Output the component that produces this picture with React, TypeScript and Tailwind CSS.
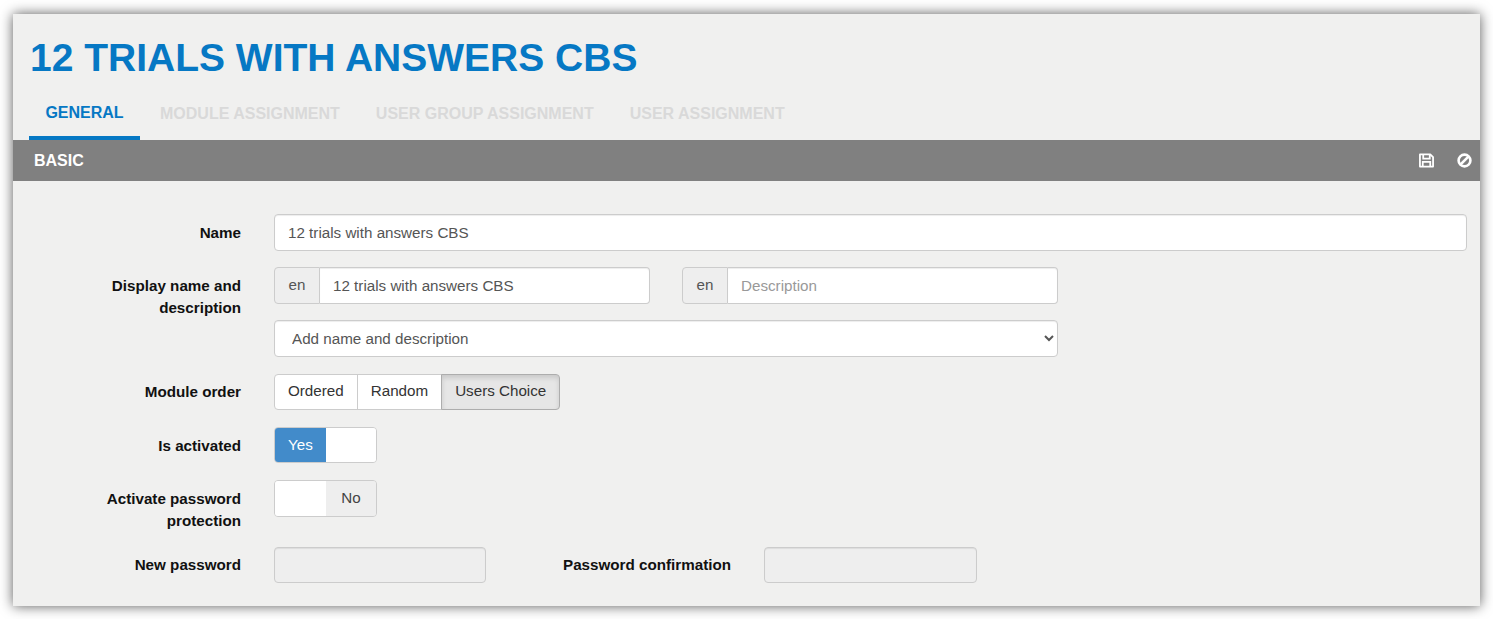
import { ReactNode } from "react";

const fieldClass =
  "h-[36.5px] rounded-[4px] border border-[#ccc] px-[13px] text-[15.2px] text-[#555] placeholder:text-[#999] outline-none shadow-[inset_0_1px_1px_rgba(0,0,0,0.075)]";

function Row({ label, pad = "pt-[7.75px]", children }: { label: ReactNode; pad?: string; children: ReactNode }) {
  return (
    <div className="flex">
      <label className={`w-[228px] shrink-0 ${pad} pl-[50px] text-right text-[15.2px] leading-[22px] font-bold text-[#111]`}>
        {label}
      </label>
      <div className="ml-[33px] min-w-0 flex-1">{children}</div>
    </div>
  );
}

function LangInput({ value, placeholder }: { value?: string; placeholder?: string }) {
  return (
    <div className="flex h-[36.5px] w-[376px]">
      <span className="flex w-[46px] items-center justify-center rounded-l-[4px] border border-[#ccc] bg-[#eee] text-[15.2px] text-[#555]">
        en
      </span>
      <input
        readOnly
        defaultValue={value}
        placeholder={placeholder}
        className={`${fieldClass} min-w-0 flex-1 rounded-l-none border-l-0 bg-white`}
      />
    </div>
  );
}

function SaveIcon() {
  return (
    <svg viewBox="0 0 16 15" className="h-[15px] w-[15px]" fill="none" stroke="currentColor" strokeWidth="1.9">
      <path d="M1 1h11l3 3v10H1z" strokeLinejoin="round" />
      <path d="M4.5 1v4.5h7V1M4 14V9h8v5" />
    </svg>
  );
}

function BanIcon() {
  return (
    <svg viewBox="0 0 16 16" className="size-[15px]" fill="none" stroke="currentColor" strokeWidth="2.8">
      <circle cx="8" cy="8" r="6.3" />
      <path d="M3.6 12.4 12.4 3.6" />
    </svg>
  );
}

export default function App() {
  return (
    <div className="min-h-[619px] bg-white px-[13px] pt-[14px] pb-[13px] font-['Liberation_Sans',Arial,sans-serif]">
      <div className="h-[592px] overflow-hidden bg-[#f0f0ef] shadow-[0_0_12px_rgba(0,0,0,0.65)]">
        <h1 className="pt-[22px] pl-[17px] text-[39px] leading-[44px] font-bold text-[#0678c4]">
          12 TRIALS WITH ANSWERS CBS
        </h1>

        <div className="mt-[14px] flex h-[46px] pl-[16px] text-[16px] font-bold">
          <div className="w-[111px] border-b-[4px] border-[#0678c4] pt-[9px] text-center leading-[20px] text-[#0678c4]">
            GENERAL
          </div>
          <div className="ml-[20px] pt-[10px] leading-[20px] text-[#d9d9d9]">MODULE ASSIGNMENT</div>
          <div className="ml-[36px] pt-[10px] leading-[20px] text-[#d9d9d9]">USER GROUP ASSIGNMENT</div>
          <div className="ml-[36px] pt-[10px] leading-[20px] text-[#d9d9d9]">USER ASSIGNMENT</div>
        </div>

        <div className="flex h-[41px] items-center bg-[#808080] pr-[8px] pl-[21px] text-white">
          <span className="flex-1 text-[16px] font-bold">BASIC</span>
          <SaveIcon />
          <span className="ml-[23px]">
            <BanIcon />
          </span>
        </div>

        <div className="flex flex-col gap-[16.75px] pt-[33px] pr-[13px]">
          <Row label="Name">
            <input readOnly defaultValue="12 trials with answers CBS" className={`${fieldClass} block w-full bg-white`} />
          </Row>

          <Row label="Display name and description">
            <div className="flex gap-[32px]">
              <LangInput value="12 trials with answers CBS" />
              <LangInput placeholder="Description" />
            </div>
            <select className="mt-[16.5px] block h-[36.5px] w-[784px] rounded-[4px] border border-[#ccc] bg-white pl-[13px] text-[15.2px] text-[#555] outline-none shadow-[inset_0_1px_1px_rgba(0,0,0,0.075)]">
              <option>Add name and description</option>
            </select>
          </Row>

          <Row label="Module order">
            <div className="flex h-[36.5px] text-[15.2px] text-[#333]">
              <div className="flex items-center rounded-l-[4px] border border-[#ccc] bg-white px-[13px]">Ordered</div>
              <div className="-ml-px flex items-center border border-[#ccc] bg-white px-[13px]">Random</div>
              <div className="-ml-px flex items-center rounded-r-[4px] border border-[#adadad] bg-[#e6e6e6] px-[13px] shadow-[inset_0_3px_5px_rgba(0,0,0,0.125)]">
                Users Choice
              </div>
            </div>
          </Row>

          <Row label="Is activated">
            <div className="flex h-[36.5px] w-[103px] overflow-hidden rounded-[4px] border border-[#ccc] text-[15.2px]">
              <div className="flex w-[51px] items-center justify-center bg-[#428bca] text-white">Yes</div>
              <div className="flex-1 bg-white" />
            </div>
          </Row>

          <Row label="Activate password protection">
            <div className="flex h-[36.5px] w-[103px] overflow-hidden rounded-[4px] border border-[#ccc] text-[15.2px]">
              <div className="w-[51px] bg-white" />
              <div className="flex flex-1 items-center justify-center bg-[#eee] text-[#444]">No</div>
            </div>
          </Row>

          <div className="-mt-[2px]">
            <Row label="New password" pad="pt-[7.75px]">
              <div className="flex">
                <input disabled className={`${fieldClass} w-[212px] bg-[#eee]`} />
                <label className="w-[245px] pt-[7.75px] text-right text-[15.2px] leading-[22px] font-bold text-[#111]">
                  Password confirmation
                </label>
                <input disabled className={`${fieldClass} ml-[33px] w-[213px] bg-[#eee]`} />
              </div>
            </Row>
          </div>
        </div>
      </div>
    </div>
  );
}
